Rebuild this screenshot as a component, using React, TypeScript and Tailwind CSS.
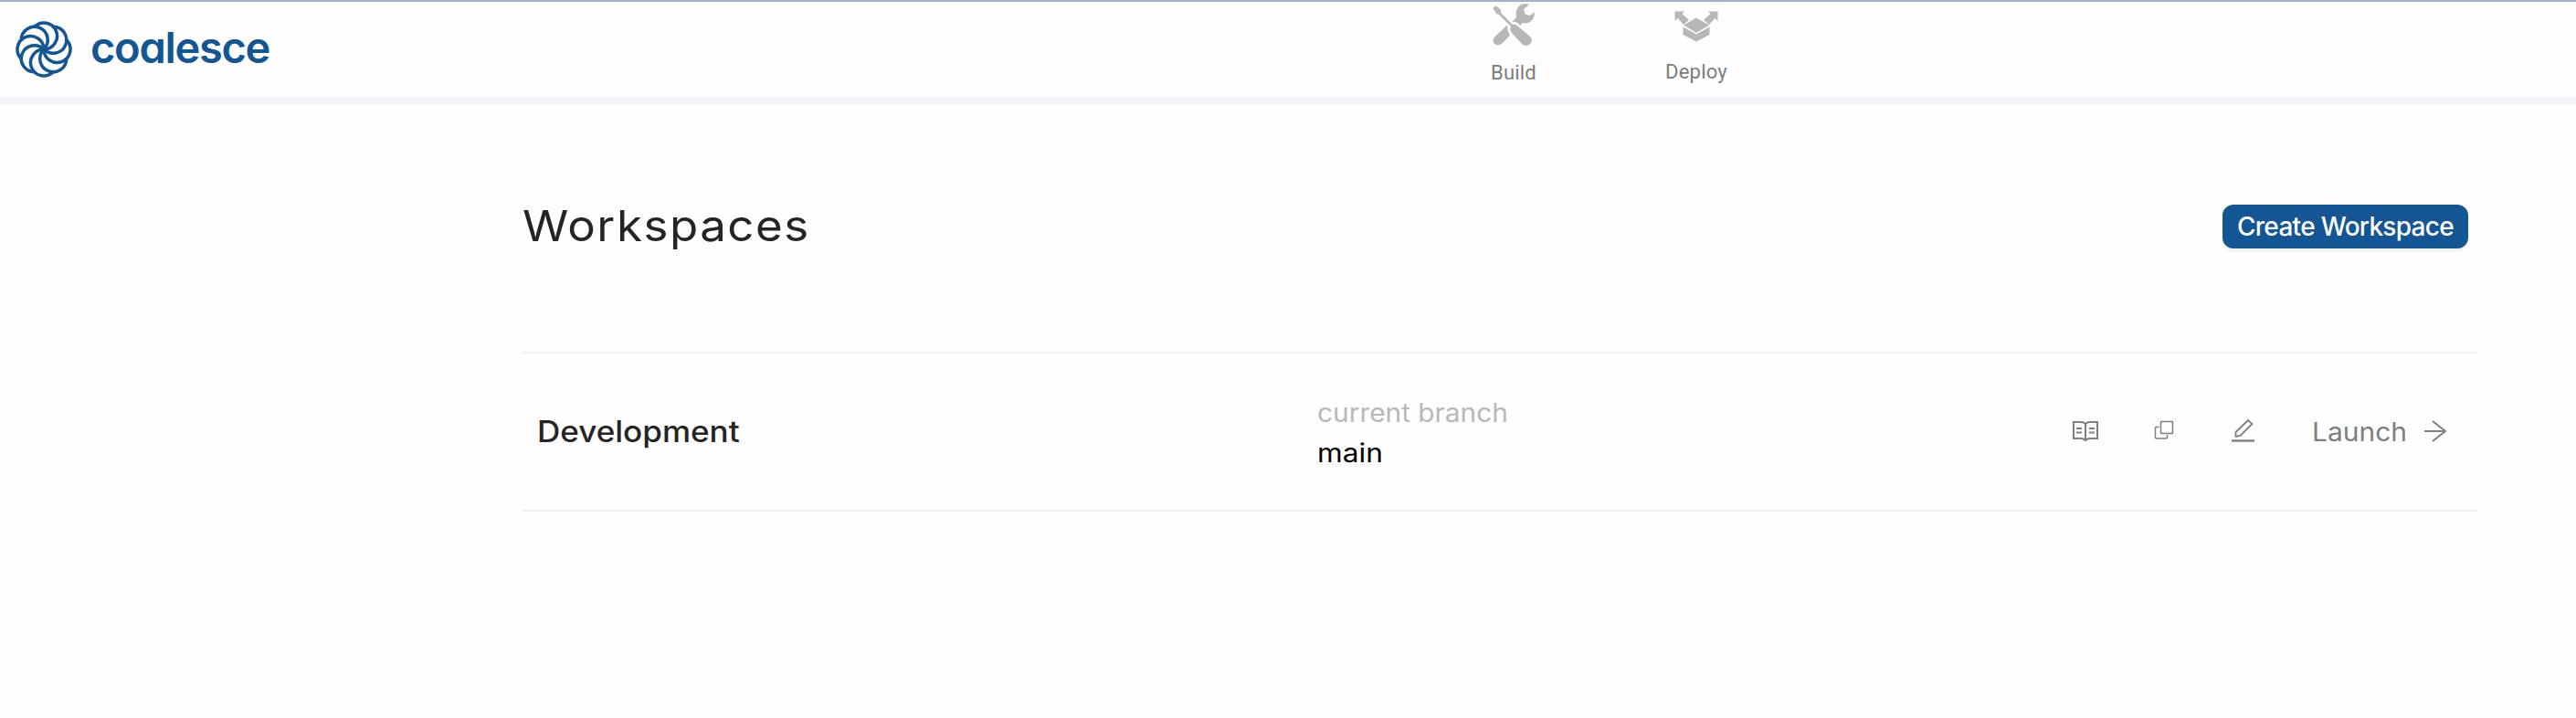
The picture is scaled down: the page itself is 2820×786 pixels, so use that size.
import React from "react";

const petals = [0, 45, 90, 135, 180, 225, 270, 315];

function LogoMark() {
  return (
    <svg className="h-[62px] w-[62px] shrink-0" viewBox="-31 -31 62 62" fill="none" stroke="#145594" strokeWidth="3.5" strokeLinecap="round">
      {petals.map((a) => (
        <path key={a} transform={`rotate(${a})`} d="M0 0A14.500 14.500 0 1 0 -10.250 -24.750" />
      ))}
    </svg>
  );
}

function BuildIcon() {
  return (
    <svg className="h-[48px] w-[48px]" viewBox="0 0 48 48" fill="#b8b6b9">
      <path d="M1.500 7Q3 4 6 5L10 9V12L23 25Q27 24 29 27L42 38Q46 42 42 46Q38 50 33 46L22 34Q19 31 21 27L8 14L5 13Z" />
      <path d="M46.500 11C48 19 41 25 34 23L31 26Q27 21 22 22L27 17C25 7 32 -1 41 3L35 8L37 14L42 15Z" />
      <path d="M17 25.500L3 38.500Q0 43 3 46Q8 49 12 45L20 36.500L17.500 31Z" />
    </svg>
  );
}

function DeployIcon() {
  return (
    <svg className="h-[34px] w-[48px]" viewBox="0 0 48 34" fill="#b8b6b9">
      <path d="M0.500 0.500H11L8.500 3L16 10L10 15L3.500 8L0.500 11Z" />
      <path d="M47.500 0.500H37L39.500 3L32 10L38 15L44.500 8L47.500 11Z" />
      <path d="M24 7.500L38 15.500L24 24L10 15.500Z" />
      <path d="M9.500 17.500L24 25.500L38.500 17.500V26L24 33.500L9.500 26Z" />
    </svg>
  );
}

export default function App() {
  return (
    <div className="flex h-[786px] w-[2820px] flex-col overflow-hidden bg-[#fefefe] font-['Inter',sans-serif]">
      <header className="flex h-[114px] border-t-2 border-b-8 border-t-[#a3b1c8] border-b-[#f4f5fa]">
        <div className="flex w-[1609px] items-start pt-[21px] pl-[17px]">
          <LogoMark />
          <span className="mt-[1px] ml-[20px] text-[47px] leading-[56px] font-semibold tracking-[-1.300px] text-[#145594] [font-feature-settings:'cv11']">coalesce</span>
        </div>
        <nav className="flex font-['Roboto',sans-serif] text-[22px] leading-[26px] text-[#7c7c7c]">
          <div className="flex w-[96px] flex-col items-center">
            <BuildIcon />
            <span className="mt-[17px] tracking-[0.200px]">Build</span>
          </div>
          <div className="ml-[104px] flex w-[96px] flex-col items-center pt-[10px]">
            <DeployIcon />
            <span className="mt-[20px] tracking-[0.200px]">Deploy</span>
          </div>
        </nav>
      </header>
      <main className="ml-[572px] flex w-[2140px] flex-col">
        <div className="flex h-[271px] items-start justify-between pt-[110px] pr-[10px]">
          <h1 className="mt-[-6px] origin-left scale-x-[1.086] text-[47px] leading-[58px] font-normal tracking-[1.400px] text-[#242424]">Workspaces</h1>
          <button className="h-[48px] w-[269px] rounded-[12px] bg-[#145594] text-[28px] leading-[48px] font-medium tracking-[-0.700px] whitespace-nowrap text-white shadow-[0_4px_0_#f4f4f4]">Create Workspace</button>
        </div>
        <section className="flex h-[175px] items-start border-y-2 border-[#f1f1f1]">
          <div className="w-[870px] pt-[66px] pl-[16px]">
            <h2 className="w-max origin-left scale-x-[1.095] text-[32px] leading-[40px] font-medium text-[#242424]">Development</h2>
          </div>
          <div className="flex w-[826px] flex-col items-start pt-[43px] text-[28px] leading-[44px]">
            <span className="origin-left scale-x-[1.066] text-[#b8b8b8]">current branch</span>
            <span className="origin-left scale-x-[1.130] text-black">main</span>
          </div>
          <div className="flex items-start text-[#7f7f7f]">
            <svg className="mt-[73px] h-[24px] w-[30px]" viewBox="0 0 30 24" fill="none" stroke="currentColor" strokeWidth="2">
              <path d="M15 4Q13 2 10 2H2V20H10Q13 20 15 22Q17 20 20 20H28V2H20Q17 2 15 4V22M5 9H11M5 13.500H11M19 9H25M19 13.500H25" />
            </svg>
            <svg className="mt-[73px] ml-[60px] h-[22px] w-[22px]" viewBox="0 0 22 22" fill="none" stroke="currentColor" strokeWidth="1.500">
              <rect x="7.500" y="1.500" width="13" height="13" rx="0.500" />
              <path d="M5.500 7.500H2.500Q1.500 7.500 1.500 8.500V19Q1.500 20 2.500 20H13.500Q14.500 20 14.500 19V16" />
            </svg>
            <svg className="mt-[71px] ml-[62px] h-[27px] w-[27px]" viewBox="0 0 27 27" fill="none" stroke="currentColor" strokeWidth="1.800">
              <path d="M5.500 20V15L19 2L23.500 6L10.500 19Z" />
              <path d="M1 24.500H26" strokeWidth="2.400" />
            </svg>
            <div className="mt-[66px] ml-[62px] w-[123px] text-[28px] leading-[40px]">
              <span className="inline-block origin-left scale-x-[1.070]">Launch</span>
            </div>
            <svg className="mt-[73px] h-[24px] w-[24px]" viewBox="0 0 24 24" fill="none" stroke="currentColor" strokeWidth="2">
              <path d="M0 12H23M9 1L23 12L9 23" />
            </svg>
          </div>
        </section>
      </main>
    </div>
  );
}
